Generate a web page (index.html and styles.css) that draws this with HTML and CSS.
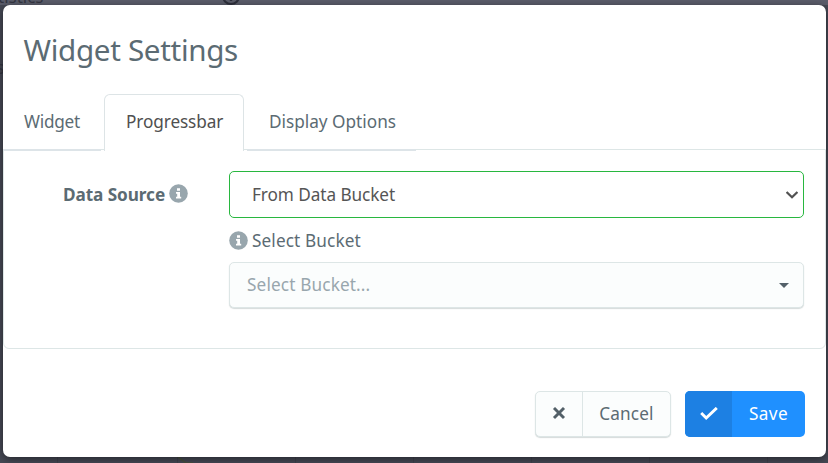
FILE: index.html
```html
<!DOCTYPE html>
<html lang="en">
<head>
<meta charset="utf-8">
<title>Widget Settings</title>
<link rel="stylesheet" href="styles.css">
</head>
<body>
<div class="backdrop" aria-hidden="true">
  <span class="behind behind-title">tistics</span>
  <span class="behind behind-side">s</span>
  <svg class="behind-icon" width="20" height="20" viewBox="0 0 20 20"><circle cx="10" cy="10" r="8" fill="none" stroke="#2e303c" stroke-width="2.2"/><path d="M10 9v6" stroke="#2e303c" stroke-width="2.4"/></svg>
  <svg class="behind-line" width="16" height="10" viewBox="0 0 16 10"><path d="M1 0L9 6H16" fill="none" stroke="#49513f" stroke-width="1.5"/></svg>
</div>
<div class="modal">
  <h1 class="title"><span>Widget Settings</span></h1>
  <nav class="tabs">
    <a class="tab tab-first"><span>Widget</span></a>
    <a class="tab tab-active"><span>Progressbar</span></a>
    <a class="tab tab-last"><span>Display Options</span></a>
  </nav>
  <section class="panel">
    <div class="label"><span class="label-text">Data Source</span>
      <svg class="info" viewBox="0 0 19 19"><circle cx="9.5" cy="9.5" r="9.3"/><path d="M8 4.2h3v2.6H8zM7 8h4v4.8h1.2v1.8H7v-1.8h1.2v-3H7z"/></svg>
    </div>
    <div class="fields">
      <div class="select"><span class="select-text">From Data Bucket</span>
        <svg width="12" height="8" viewBox="0 0 12 8"><path d="M.6 1L6 6.2L11.4 1" fill="none" stroke="#525252" stroke-width="2.2"/></svg>
      </div>
      <div class="sublabel">
        <svg class="info" viewBox="0 0 19 19"><circle cx="9.5" cy="9.5" r="9.3"/><path d="M8 4.2h3v2.6H8zM7 8h4v4.8h1.2v1.8H7v-1.8h1.2v-3H7z"/></svg>
        <span class="sublabel-text">Select Bucket</span>
      </div>
      <div class="picker"><span class="picker-text">Select Bucket...</span>
        <svg width="10" height="5" viewBox="0 0 10 5"><path d="M0 0h10L5 5z" fill="#536069"/></svg>
      </div>
    </div>
  </section>
  <footer class="actions">
    <button class="button cancel"><span class="button-icon"><svg width="14" height="14" viewBox="0 0 14 14"><path d="M2 1L12 11M12 1L2 11" stroke="#536068" stroke-width="2.9"/></svg></span><span class="button-label"><span class="cancel-text">Cancel</span></span></button>
    <button class="button save"><span class="button-icon"><svg width="18" height="14" viewBox="0 0 18 14"><path d="M1.2 6L6.2 11L16.8 .9" fill="none" stroke="#fff" stroke-width="2.9"/></svg></span><span class="button-label"><span class="save-text">Save</span></span></button>
  </footer>
</div>
</body>
</html>
```
FILE: styles.css
```css
* { box-sizing: border-box; }
body {
  margin: 0;
  height: 463px;
  overflow: hidden;
  padding: 5px 2px 6px 3px;
  background: #464855;
  font-family: "Noto Sans", "Open Sans", sans-serif;
  font-size: 17.2px;
  line-height: 24px;
  color: #5b6b73;
}
.backdrop {
  position: absolute;
  inset: 0;
  overflow: hidden;
  background:
    linear-gradient(#5b5d6b, #5b5d6b) 0 0 / 100% 5px no-repeat,
    repeating-linear-gradient(90deg, #464955 0 117px, #3f424d 117px 118px) 60px 0;
}
.behind { position: absolute; color: #343642; }
.behind-title { left: -2px; top: -15px; font-size: 17px; line-height: 24px; }
.behind-side { left: -4px; top: 55px; font-size: 18px; }
.behind-icon { position: absolute; left: 221px; top: -14px; }
.behind-line { position: absolute; left: 177px; top: 457px; }
.modal {
  position: relative;
  height: 452px;
  background: #fff;
  border-radius: 7px;
  box-shadow: 0 2px 8px rgba(0, 0, 0, .5);
}
.title {
  margin: 0;
  height: 89px;
  padding: 25px 0 0 20.5px;
  font-size: 29.6px;
  line-height: 40px;
  font-weight: 400;
  letter-spacing: -.32px;
  white-space: nowrap;
}
.tabs {
  position: relative;
  z-index: 1;
  display: flex;
  height: 57px;
}
.tab { padding-top: 16px; white-space: nowrap; letter-spacing: 0; }
.tab-first { width: 101px; padding-left: 21px; letter-spacing: -.25px; }
.tab-active {
  width: 140px;
  padding-left: 21px;
  padding-top: 15px;
  color: #505050;
  letter-spacing: -.1px;
  background: #fff;
  border: 1px solid #dde4e6;
  border-bottom: 0;
  border-radius: 6px 6px 0 0;
}
.tab-last { width: 172px; padding-left: 25px; }
.tab-first, .tab-last {
  background: linear-gradient(#dde4e8, #dde4e8) right 0 bottom 0 / calc(100% - 3px) 2px no-repeat;
}
.tab-first { background-position: left bottom; }
.panel {
  display: flex;
  height: 200px;
  margin-top: -2px;
  padding: 21px 21px 0 59px;
  border: 1px solid #dde6e6;
  border-radius: 0 0 6px 6px;
}
.label { display: flex; width: 166px; padding-top: 12px; font-weight: 700; letter-spacing: -.08px; white-space: nowrap; }
.info { display: block; width: 19px; height: 19px; flex: none; }
.info circle { fill: #98a6ad; }
.info path { fill: #fff; }
.label .info { margin: 1px 0 0 4px; }
.fields { flex: 1; min-width: 0; }
.select, .picker { display: flex; align-items: center; justify-content: space-between; border-radius: 5px; }
.select { height: 47px; padding: 0 5px 0 22px; border: 1px solid #28b73f; color: #555; letter-spacing: -.07px; }
.sublabel { display: flex; align-items: center; height: 44px; gap: 4px; letter-spacing: .12px; }
.sublabel-text { padding-top: 2px; }
.picker { height: 46px; padding: 0 14px 0 17px; border: 1px solid #dde6e6; background: #fbfdfd; box-shadow: 0 1px 1px rgba(80, 105, 105, .24); color: #98a6ad; letter-spacing: .14px; }
.actions { display: flex; justify-content: flex-end; gap: 14px; padding: 42px 21px 0 0; }
.button {
  display: flex;
  height: 46px;
  padding: 0;
  overflow: hidden;
  border: 0;
  border-radius: 5px;
  font: inherit;
  color: #5b6b73;
}
.button-icon { display: flex; align-items: center; justify-content: center; width: 47px; height: 100%; }
.button-label { display: flex; align-items: center; justify-content: center; flex: 1; height: 100%; letter-spacing: .15px; }
.cancel { width: 136px; border: 1px solid #dde6e6; background: #fbfdfd; box-shadow: 0 1px 1px rgba(80, 105, 105, .24); }
.cancel .button-icon { border-right: 1px solid #dde6e6; }
.save { width: 120px; background: #1f90ff; color: #fff; }
.save .button-icon { background: #1d80e3; }
.save .button-label { letter-spacing: .4px; }
```
